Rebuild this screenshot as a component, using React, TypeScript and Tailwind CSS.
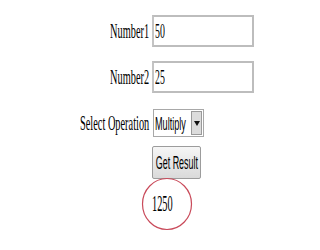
import React from 'react';

const serif = "font-['Liberation_Serif',serif]";
const sans = "font-['Liberation_Sans',Arial,sans-serif]";

const Label = ({ text }: { text: string }) => (
  <div className={`flex h-full items-center justify-end whitespace-nowrap text-[22px] leading-none text-black ${serif}`}>
    <span className="inline-block origin-right scale-x-[0.47]">{text}</span>
  </div>
);

const TextBox = ({ value }: { value: string }) => (
  <div className={`flex h-[32px] w-[102px] items-center border-2 border-[#bdbdbd] border-l-[#c4c4c4] bg-white pl-[1px] text-[21px] leading-none ${serif}`}>
    <span className="inline-block origin-left scale-x-[0.47] whitespace-nowrap">{value}</span>
  </div>
);

export default function App() {
  return (
    <div className="h-[250px] w-[320px] overflow-hidden bg-white pt-[15px]">
      <div className="grid grid-cols-[149px_1fr] gap-x-[3px]">
        <Label text="Number1" />
        <TextBox value="50" />

        <div className="col-span-2 h-[14px]" />

        <Label text="Number2" />
        <TextBox value="25" />

        <div className="col-span-2 h-[16px]" />

        <Label text="Select Operation" />
        <div className={`ml-[1px] flex h-[28px] w-[51px] items-stretch border border-[#a8a8a8] bg-white text-[19px] leading-none ${sans}`}>
          <div className="flex flex-1 items-center overflow-hidden pl-[1px]">
            <span className="inline-block origin-left scale-x-[0.48] whitespace-nowrap">Multiply</span>
          </div>
          <div className="m-[1px] flex w-[11px] items-center justify-center border border-[#9a9a9a] bg-[#dcdcdc]">
            <svg width="6" height="5" viewBox="0 0 6 5">
              <path d="M0 0 L6 0 L3 5 Z" fill="#111" />
            </svg>
          </div>
        </div>

        <div className="col-span-2 h-[9px]" />

        <div />
        <div className={`flex h-[33px] w-[49px] items-center justify-center overflow-hidden rounded-[2px] border border-[#9c9c9c] bg-gradient-to-b from-[#f6f6f6] to-[#dadada] text-[19px] leading-none text-black ${sans}`}>
          <span className="inline-block scale-x-[0.47] whitespace-nowrap">Get Result</span>
        </div>

        <div />
        <div className={`relative h-[50px] text-[23px] leading-none ${serif}`}>
          <svg className="absolute left-[-11px] top-[-2px]" width="52" height="54" viewBox="0 0 52 54">
            <ellipse cx="26" cy="27" rx="24.5" ry="25.5" fill="none" stroke="#c94a5a" strokeWidth="1.2" />
          </svg>
          <div className="flex h-full items-center pb-[2px]">
            <span className="inline-block origin-left scale-x-[0.45] whitespace-nowrap">1250</span>
          </div>
        </div>
      </div>
    </div>
  );
}
